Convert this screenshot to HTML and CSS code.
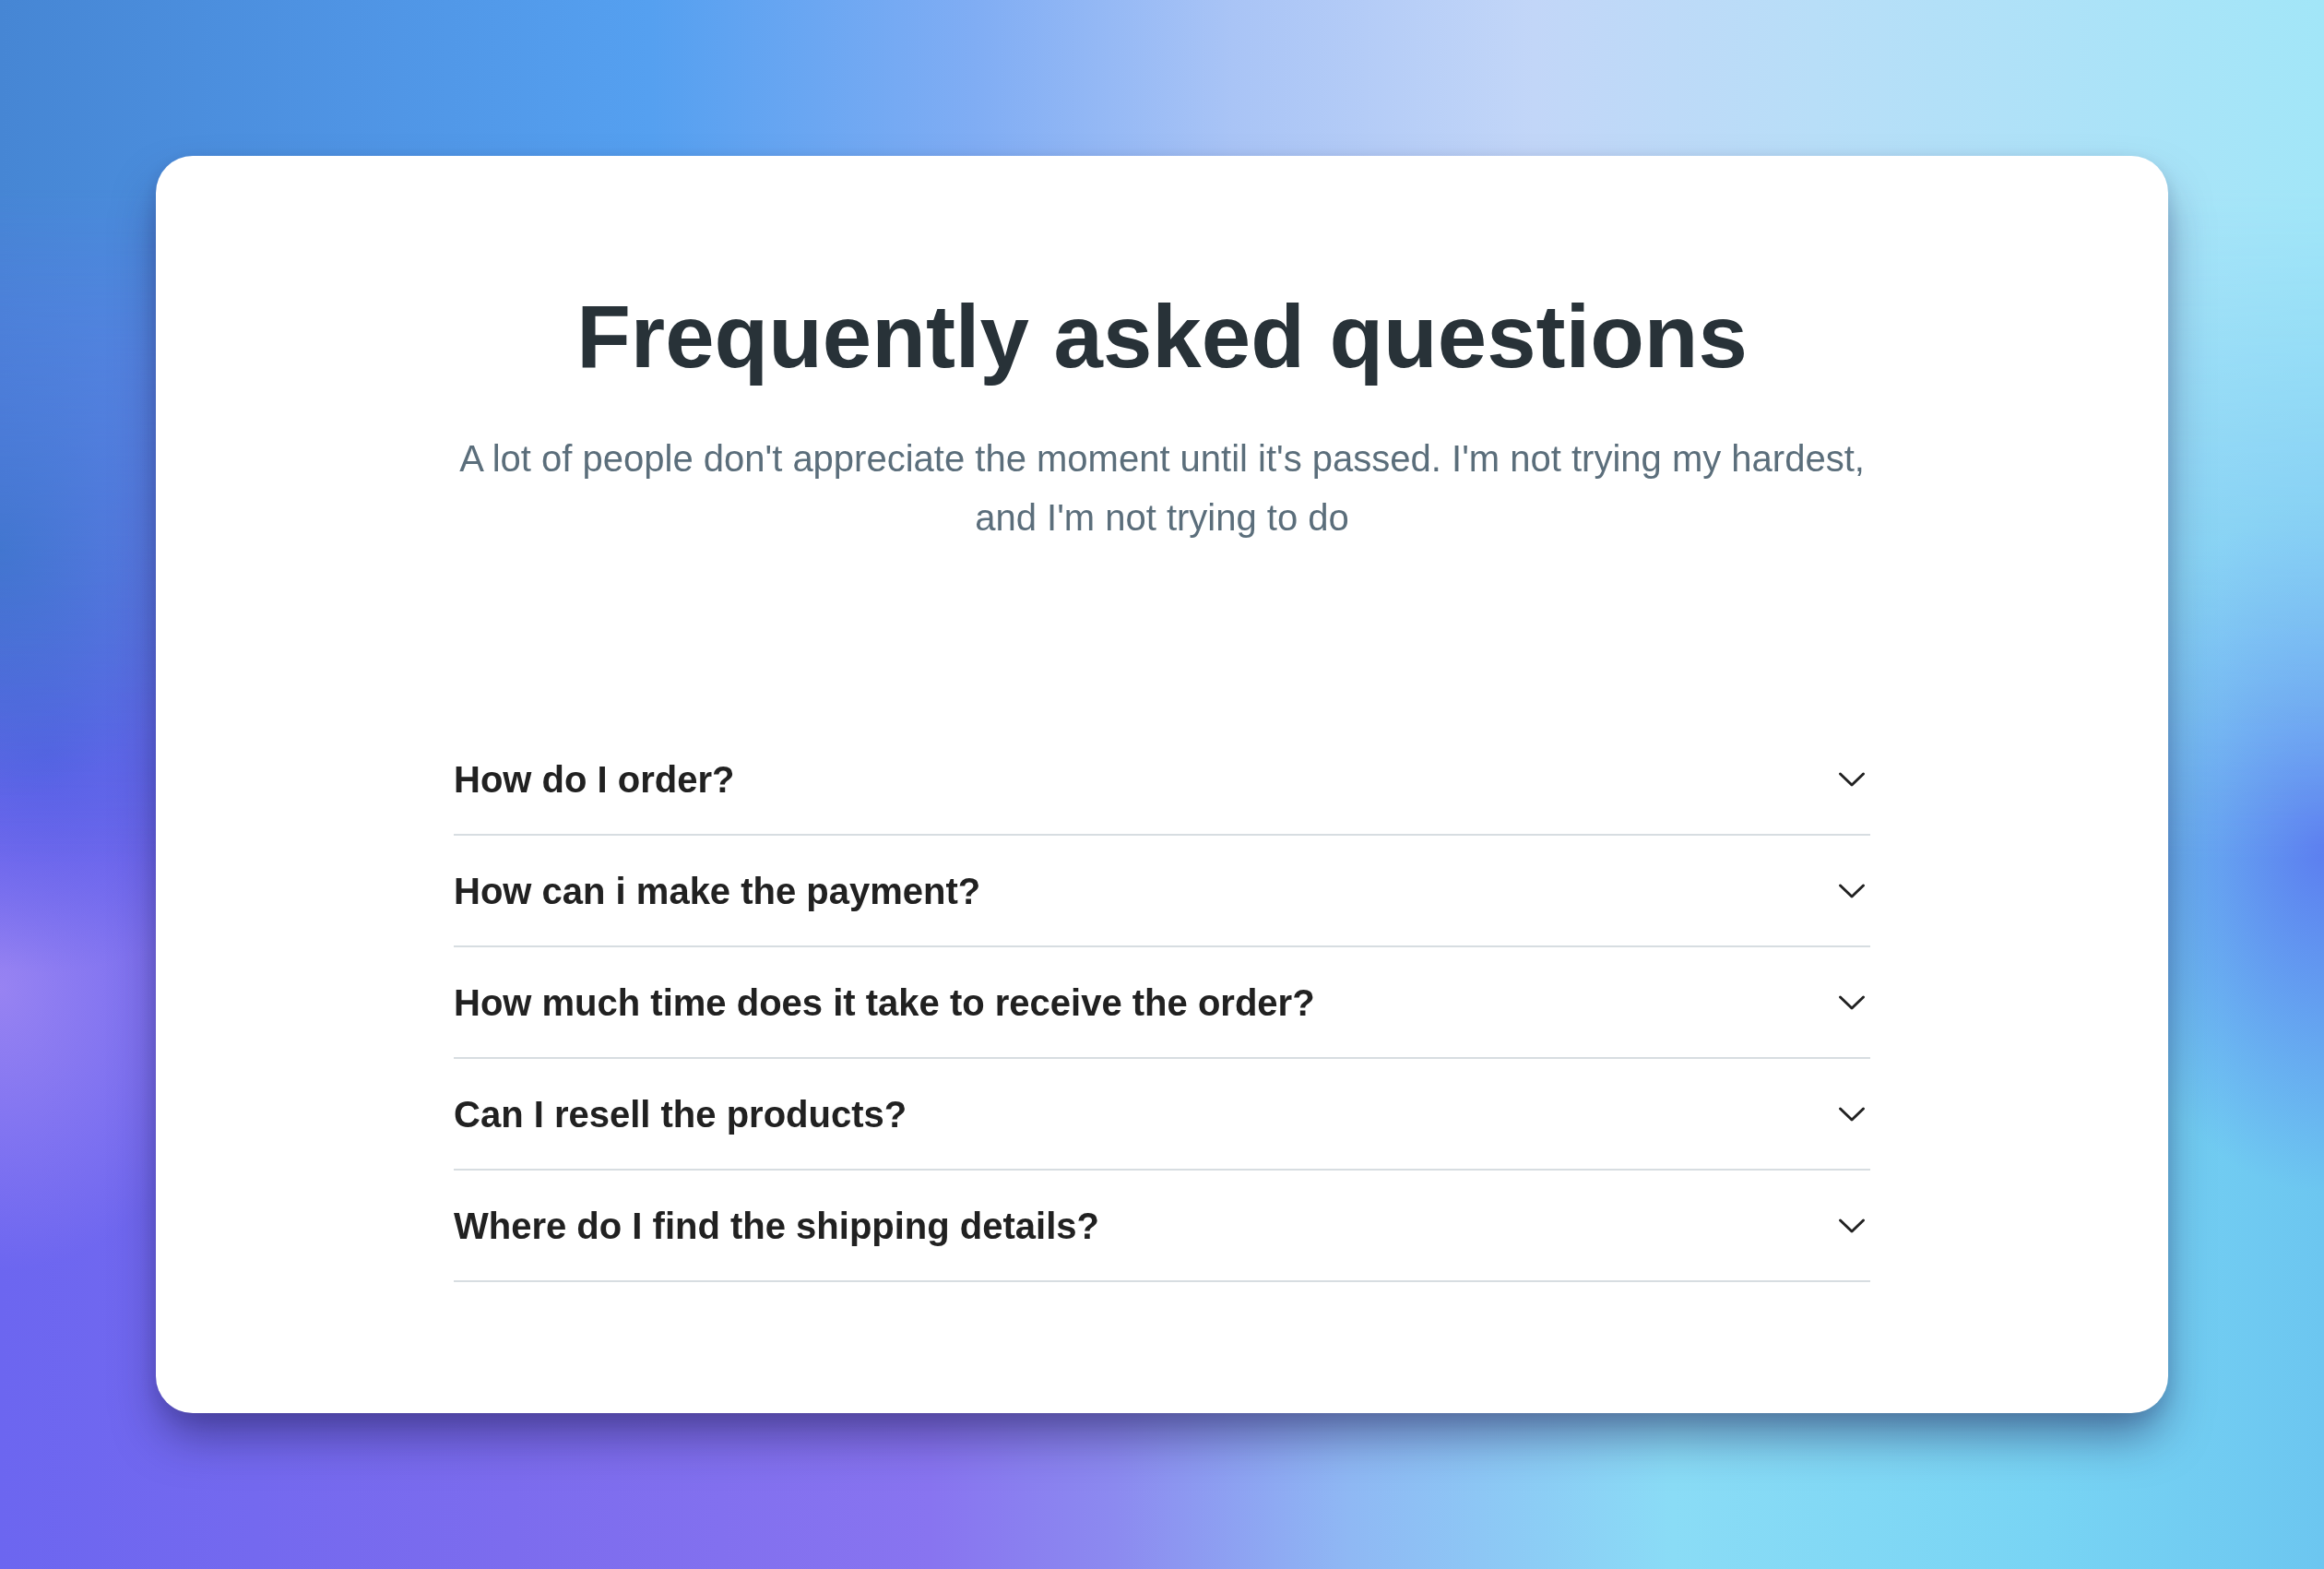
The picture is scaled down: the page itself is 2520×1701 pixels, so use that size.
FILE: index.html
```html
<!DOCTYPE html>
<html lang="en">
<head>
<meta charset="utf-8">
<title>FAQ</title>
<link rel="stylesheet" href="styles.css">
</head>
<body>
<div class="page">
  <section class="card">
    <h1 class="title">Frequently asked questions</h1>
    <p class="subtitle">A lot of people don't appreciate the moment until it's passed. I'm not trying my hardest, and I'm not trying to do</p>
    <ul class="faq">
      <li class="faq-item"><span class="q">How do I order?</span><svg class="chev" viewBox="0 0 36 36" width="36" height="36"><polyline points="5.5,12 18,24 30.5,12"/></svg></li>
      <li class="faq-item"><span class="q">How can i make the payment?</span><svg class="chev" viewBox="0 0 36 36" width="36" height="36"><polyline points="5.5,12 18,24 30.5,12"/></svg></li>
      <li class="faq-item"><span class="q">How much time does it take to receive the order?</span><svg class="chev" viewBox="0 0 36 36" width="36" height="36"><polyline points="5.5,12 18,24 30.5,12"/></svg></li>
      <li class="faq-item"><span class="q">Can I resell the products?</span><svg class="chev" viewBox="0 0 36 36" width="36" height="36"><polyline points="5.5,12 18,24 30.5,12"/></svg></li>
      <li class="faq-item"><span class="q">Where do I find the shipping details?</span><svg class="chev" viewBox="0 0 36 36" width="36" height="36"><polyline points="5.5,12 18,24 30.5,12"/></svg></li>
    </ul>
  </section>
</div>
</body>
</html>
```

FILE: styles.css
```css
html {
  background:
    radial-gradient(ellipse 9% 16% at 0% 35%, rgba(58,104,200,0.9), rgba(58,104,200,0) 100%),
    radial-gradient(ellipse 10% 14% at 2% 48%, rgba(90,92,232,1), rgba(90,92,232,0) 100%),
    radial-gradient(ellipse 10% 18% at 0% 63%, rgba(156,134,242,0.9), rgba(156,134,242,0) 100%),
    radial-gradient(ellipse 10% 22% at 100% 54%, rgba(92,126,240,1), rgba(92,126,240,0) 100%),
    radial-gradient(ellipse 10% 18% at 100% 30%, rgba(106,184,240,0.9), rgba(106,184,240,0) 100%),
    linear-gradient(90deg, #6c66f0 0%, #7c6cee 22%, #8874f0 40%, #8c8af0 48%, #8fb8f4 58%, #8adcf6 72%, #78d4f4 88%, #6cc6f0 100%);
  min-height: 100%;
}

body {
  margin: 0;
  font-family: "Liberation Sans", Arial, Helvetica, sans-serif;
  position: relative;
}

body::before {
  content: "";
  position: fixed;
  inset: 0;
  z-index: -1;
  background: linear-gradient(90deg, #4686d4 0%, #4f94e4 15%, #55a0f0 28%, #80adf4 42%, #a9c4f6 53%, #c2d6f8 66%, #b8def8 78%, #a2e6f8 100%);
  -webkit-mask-image: linear-gradient(to bottom, #000 0%, #000 12%, rgba(0,0,0,0.6) 30%, rgba(0,0,0,0) 55%);
  mask-image: linear-gradient(to bottom, #000 0%, #000 12%, rgba(0,0,0,0.6) 30%, rgba(0,0,0,0) 55%);
}

.page {
  padding: 169px;
}

.card {
  background: #ffffff;
  border-radius: 40px;
  padding: 138px 0 142px;
  box-shadow: 0 30px 50px -6px rgba(30, 25, 80, 0.5), 0 6px 20px rgba(30, 30, 80, 0.12);
  text-align: center;
}

.title {
  margin: 0;
  font-size: 96px;
  line-height: 115px;
  font-weight: 700;
  color: #283238;
}

.subtitle {
  margin: 43px auto 0;
  max-width: 1560px;
  font-size: 40px;
  line-height: 64px;
  color: #5b6e7b;
}

.faq {
  list-style: none;
  margin: 192px auto 0;
  padding: 0;
  width: 1536px;
  text-align: left;
}

.faq-item {
  display: flex;
  align-items: center;
  justify-content: space-between;
  padding: 36px 0 35px;
  border-bottom: 2px solid #d7dde1;
}

.q {
  font-size: 40px;
  line-height: 48px;
  font-weight: 700;
  color: #212121;
}

.chev {
  margin-right: 2px;
  fill: none;
  stroke: #222222;
  stroke-width: 3;
  stroke-linecap: round;
  stroke-linejoin: round;
}
```
